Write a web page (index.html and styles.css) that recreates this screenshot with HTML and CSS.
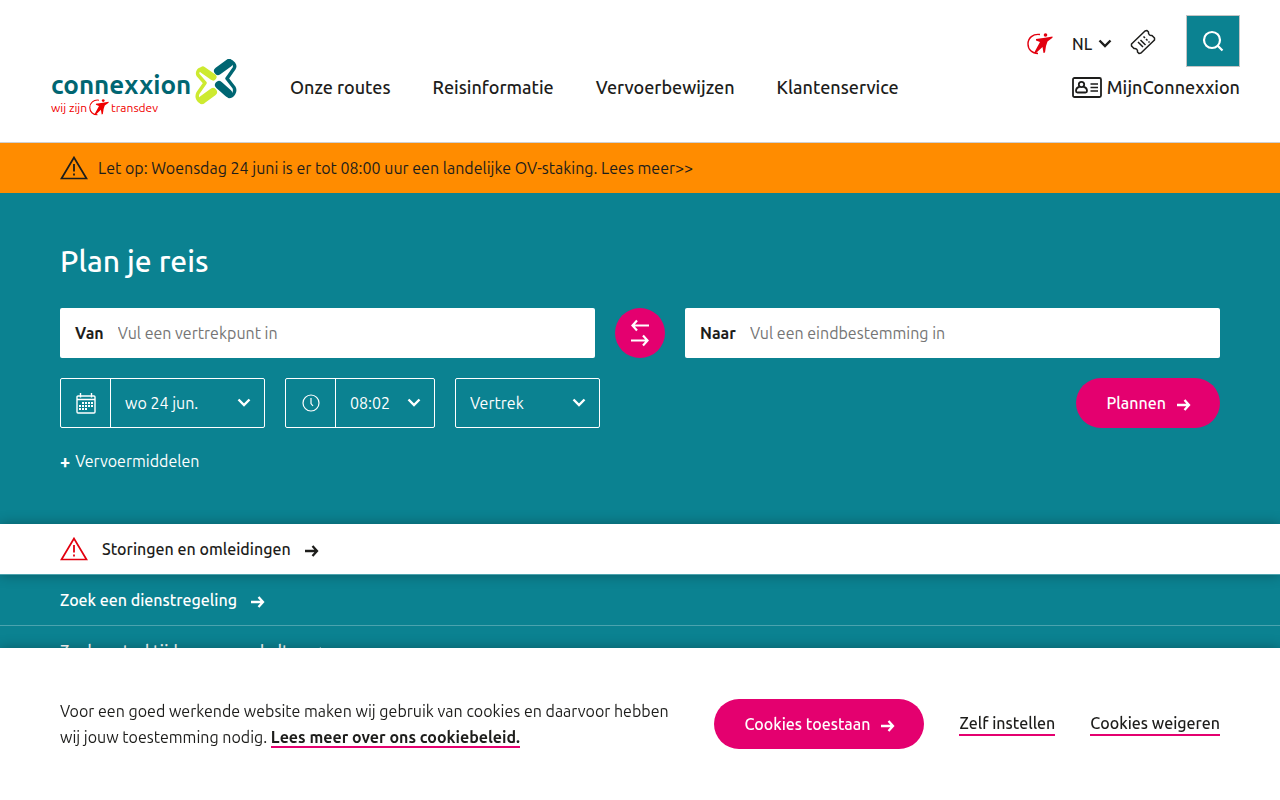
FILE: index.html
```html
<!DOCTYPE html>
<html lang="nl">
<head>
    <meta charset="UTF-8">
    <meta name="viewport" content="width=device-width, initial-scale=1.0">
    <title>Connexxion</title>
    <link rel="stylesheet" href="styles.css">
</head>
<body>
    <!-- Shared icons -->
    <svg class="sprite" aria-hidden="true">
        <symbol id="arrow" viewBox="0 0 14 12">
            <path d="M0 6h12M7.500 1l4.500 5-4.500 5" fill="none" stroke="currentColor" stroke-width="2.300"/>
        </symbol>
        <symbol id="chevron" viewBox="0 0 14 10">
            <path d="M1.500 1.500l5.500 5.500 5.500-5.500" fill="none" stroke="currentColor" stroke-width="2.400"/>
        </symbol>
        <symbol id="warning" viewBox="0 0 28 24">
            <path d="M14 1.500L1.500 22.500h25z" fill="none" stroke="currentColor" stroke-width="1.700"/>
            <path d="M14 8v7.500M14 17.500v2" fill="none" stroke="currentColor" stroke-width="1.800"/>
        </symbol>
        <symbol id="transdev" viewBox="0 0 26 22">
            <path d="M13 1.500C6 .5 1 5 1 11c0 5.500 4 9.500 10 9.500" fill="none" stroke="currentColor" stroke-width="1.400"/>
            <circle cx="18.500" cy="2" r="1.800" fill="currentColor"/>
            <path d="M9 6l9-1.200 7.500-1.300v1.200L20.500 8.500 19 13l-1 6.500-1.500.5-1-6-6.500 6H7l6-11-4-1.500z" fill="currentColor"/>
        </symbol>
    </svg>

    <header class="header">
        <a class="logo" href="#" aria-label="Connexxion, wij zijn transdev">
            <span class="logo-text">
                <span class="logo-name">connexxion</span>
                <span class="logo-sub">wij zijn <svg class="logo-figure"><use href="#transdev"/></svg> <span>transdev</span></span>
            </span>
            <svg class="logo-mark" viewBox="0 0 42 46">
                <g fill="none" stroke-linejoin="round" stroke-linecap="round">
                    <path d="M18 18L8 11" stroke="#cdea30" stroke-width="7"/>
                    <path d="M7 10C3 10 2 14 3 16l7 8-7 10c-2 4 0 9 5 9" stroke="#cdea30" stroke-width="3.500"/>
                    <path d="M7 41l11-8" stroke="#cdea30" stroke-width="8"/>
                    <path d="M23 12l11-8" stroke="#006672" stroke-width="8"/>
                    <path d="M33 2.500c5-1 8 4 6 7l-7 10 7 9c2 4-1 9-5 9" stroke="#006672" stroke-width="3.500"/>
                    <path d="M24 26l9 8" stroke="#006672" stroke-width="8"/>
                </g>
            </svg>
        </a>
        <nav class="nav">
            <a href="#">Onze routes</a>
            <a href="#">Reisinformatie</a>
            <a href="#">Vervoerbewijzen</a>
            <a href="#">Klantenservice</a>
        </nav>
        <div class="header-side">
            <div class="header-tools">
                <a class="transdev-link" href="#" aria-label="Transdev"><svg width="26" height="22"><use href="#transdev"/></svg></a>
                <div class="language">
                    <select aria-label="Taal"><option>NL</option><option>EN</option></select>
                    <svg class="chevron"><use href="#chevron"/></svg>
                </div>
                <a class="ticket" href="#" aria-label="Tickets">
                    <svg width="26" height="26" viewBox="0 0 26 26" fill="none" stroke="currentColor" stroke-width="1.500" stroke-linejoin="round">
                        <path d="M1.500 15L15 2l2-.5 1.500 1.500c-.5 2 1.500 4 3.500 3.500L24.500 9v2L11 24l-2 .5L7.500 23c.5-2-1.500-4-3.500-3.500L1.500 17z"/>
                        <path d="M8 13l5 5M10.500 11l5 5M13.500 7.500l1.500 1.500M16 10l1.500 1.500M18.500 12.500l1 1"/>
                    </svg>
                </a>
                <button class="search" type="button" aria-label="Zoeken">
                    <svg width="22" height="22" viewBox="0 0 22 22" fill="none" stroke="currentColor" stroke-width="2.200">
                        <circle cx="10" cy="10" r="8"/>
                        <path d="M15.500 15.500l5 5"/>
                    </svg>
                </button>
            </div>
            <a class="account" href="#">
                <svg width="30" height="21" viewBox="0 0 30 21" fill="none" stroke="currentColor" stroke-width="1.800">
                    <rect x="1" y="1" width="28" height="19" rx="1.500"/>
                    <circle cx="9.500" cy="7.500" r="2.700"/>
                    <path d="M7.500 10c-3 .5-3.500 2-3.500 4 0 1 .5 1.500 1.500 1.500h8c1 0 1.500-.5 1.500-1.500 0-2-.5-3.500-3.500-4"/>
                    <path d="M18.500 7h7.500M18.500 10.500h7.500M18.500 14h7.500" stroke-width="1.500"/>
                </svg>
                MijnConnexxion
            </a>
        </div>
    </header>

    <a class="alert" href="#">
        <svg width="28" height="24"><use href="#warning"/></svg>
        Let op: Woensdag 24 juni is er tot 08:00 uur een landelijke OV-staking. Lees meer&gt;&gt;
    </a>

    <main>
        <form class="planner">
            <h1>Plan je reis</h1>
            <div class="route">
                <div class="field">
                    <label for="from">Van</label>
                    <input id="from" type="text" placeholder="Vul een vertrekpunt in">
                </div>
                <button class="swap" type="button" aria-label="Wissel van en naar">
                    <svg width="20" height="28" viewBox="0 0 20 28" fill="none" stroke="currentColor" stroke-width="2.200">
                        <path d="M19 6.500H2.500M7 1.500L2.500 6.500 7 11.500M1 21.500h16.500M13 16.500l4.500 5-4.500 5"/>
                    </svg>
                </button>
                <div class="field">
                    <label for="to">Naar</label>
                    <input id="to" type="text" placeholder="Vul een eindbestemming in">
                </div>
            </div>
            <div class="options">
                <div class="picker picker-date">
                    <label for="date" aria-label="Datum">
                        <svg width="20" height="21" viewBox="0 0 20 21" fill="none" stroke="currentColor" stroke-width="1.400">
                            <rect x="1" y="3" width="18" height="17" rx="1"/>
                            <path d="M1 6.500h18M4.500 0v4.500M15.500 0v4.500"/>
                            <path d="M6 10h12M3 13h15M3 16h9" stroke-width="1.800" stroke-dasharray="2 1"/>
                        </svg>
                    </label>
                    <select id="date"><option>wo 24 jun.</option></select>
                    <svg class="chevron"><use href="#chevron"/></svg>
                </div>
                <div class="picker picker-time">
                    <label for="time" aria-label="Tijd">
                        <svg width="18" height="18" viewBox="0 0 18 18" fill="none" stroke="currentColor" stroke-width="1.200">
                            <circle cx="9" cy="9" r="8"/>
                            <path d="M9 4v5.500l2 2.500"/>
                        </svg>
                    </label>
                    <select id="time"><option>08:02</option></select>
                    <svg class="chevron"><use href="#chevron"/></svg>
                </div>
                <div class="picker picker-type">
                    <select aria-label="Vertrek of aankomst"><option>Vertrek</option><option>Aankomst</option></select>
                    <svg class="chevron"><use href="#chevron"/></svg>
                </div>
                <button class="button" type="submit">Plannen <svg class="arrow"><use href="#arrow"/></svg></button>
            </div>
            <button class="modes" type="button"><b>+</b> Vervoermiddelen</button>
        </form>

        <nav class="shortcuts">
            <a class="shortcut shortcut-alert" href="#">
                <svg width="28" height="24"><use href="#warning"/></svg>
                Storingen en omleidingen <svg class="arrow"><use href="#arrow"/></svg>
            </a>
            <a class="shortcut" href="#">Zoek een dienstregeling <svg class="arrow"><use href="#arrow"/></svg></a>
            <a class="shortcut" href="#">Zoek vertrektijden van een halte <svg class="arrow"><use href="#arrow"/></svg></a>
        </nav>
    </main>

    <section class="cookies" aria-label="Cookies">
        <p>Voor een goed werkende website maken wij gebruik van cookies en daarvoor hebben wij jouw toestemming nodig. <a href="#">Lees meer over ons cookiebeleid.</a></p>
        <button class="button" type="button">Cookies toestaan <svg class="arrow"><use href="#arrow"/></svg></button>
        <a href="#">Zelf instellen</a>
        <a href="#">Cookies weigeren</a>
    </section>
</body>
</html>
```
FILE: styles.css
```css
* {
    box-sizing: border-box;
}

body {
    margin: 0;
    padding-bottom: 152px;
    font-family: Ubuntu, "Noto Sans", sans-serif;
    font-size: 16px;
    line-height: 26px;
    color: #1d1d1b;
    background-color: #0b8291;
}

a {
    color: inherit;
    text-decoration: none;
}

button,
input,
select {
    font: inherit;
    color: inherit;
}

button {
    cursor: pointer;
}

svg {
    flex: none;
}

.sprite {
    display: none;
}

.arrow {
    width: 14px;
    height: 12px;
}

.chevron {
    position: absolute;
    right: 13px;
    width: 14px;
    height: 10px;
    pointer-events: none;
}

.button {
    display: flex;
    align-items: center;
    gap: 11px;
    height: 50px;
    padding: 0 29px 0 30px;
    border: none;
    border-radius: 25px;
    background-color: #e4006f;
    color: #ffffff;
    font-weight: 500;
    white-space: nowrap;
}

.button .arrow {
    margin-top: 4px;
}

/* Header */
.header {
    display: flex;
    align-items: flex-end;
    padding: 15px 40px 42px 51px;
    border-bottom: 1px solid #d0d0d0;
    background-color: #ffffff;
}

.logo {
    display: flex;
    width: 187px;
    margin-right: 52px;
    margin-bottom: -16px;
}

.logo-text {
    display: flex;
    flex-direction: column;
    width: 144px;
    padding-top: 12px;
}

.logo-name {
    font-size: 26px;
    font-weight: 700;
    line-height: 28px;
    color: #006672;
}

.logo-sub {
    display: flex;
    align-items: center;
    gap: 2px;
    font-size: 12px;
    line-height: 16px;
    color: #f00000;
}

.logo-figure {
    width: 20px;
    height: 17px;
}

.logo-mark {
    width: 42px;
    height: 46px;
}

.nav {
    display: flex;
    gap: 42px;
    font-size: 18px;
    font-weight: 500;
    white-space: nowrap;
}

.header-side {
    display: flex;
    flex-direction: column;
    align-items: flex-end;
    gap: 7px;
    margin-left: auto;
    font-weight: 500;
}

.header-tools {
    display: flex;
    align-items: center;
}

.transdev-link {
    display: flex;
    margin-top: 6px;
    margin-right: 19px;
    color: #e2000f;
}

.language {
    position: relative;
    display: flex;
    align-items: center;
    margin-top: 6px;
}

.language select {
    width: 40px;
    padding: 0;
    border: none;
    background: none;
    appearance: none;
}

.language .chevron {
    right: 0;
}

.ticket {
    display: flex;
    margin: 2px 30px 0 18px;
}

.search {
    display: flex;
    align-items: center;
    justify-content: center;
    width: 54px;
    height: 52px;
    border: 1px solid #c4c4c4;
    background-color: #0b8291;
    color: #ffffff;
}

.account {
    display: flex;
    align-items: center;
    gap: 5px;
    font-size: 18px;
}

/* Alert bar */
.alert {
    display: flex;
    align-items: center;
    gap: 10px;
    min-height: 50px;
    padding: 0 60px;
    background-color: #ff8c00;
}

/* Planner */
.planner {
    padding: 48px 60px 50px;
    color: #ffffff;
}

.planner h1 {
    margin: 0 0 27px;
    font-size: 30px;
    font-weight: 500;
    line-height: 40px;
}

.route {
    display: flex;
    gap: 20px;
}

.field {
    display: flex;
    flex: 1;
    align-items: center;
    gap: 14px;
    height: 50px;
    padding: 0 15px;
    border-radius: 2px;
    background-color: #ffffff;
    color: #1d1d1b;
}

.field label {
    font-weight: 700;
}

.field input {
    flex: 1;
    min-width: 0;
    padding: 0;
    border: none;
    background: none;
}

.field input::placeholder {
    color: #757575;
}

.swap {
    display: flex;
    align-items: center;
    justify-content: center;
    width: 50px;
    height: 50px;
    padding: 0;
    border: none;
    border-radius: 50%;
    background-color: #e4006f;
    color: #ffffff;
}

.options {
    display: flex;
    gap: 20px;
    margin: 20px 0;
}

.options .button {
    margin-left: auto;
}

.picker {
    position: relative;
    display: flex;
    align-items: center;
    height: 50px;
    border: 1px solid #ffffff;
    border-radius: 2px;
}

.picker label {
    display: flex;
    align-items: center;
    justify-content: center;
    width: 50px;
    height: 100%;
    border-right: 1px solid #ffffff;
}

.picker select {
    flex: 1;
    min-width: 0;
    height: 100%;
    padding: 0 14px;
    border: none;
    background: none;
    appearance: none;
}

.picker-date {
    width: 205px;
}

.picker-time {
    width: 150px;
}

.picker-type {
    width: 145px;
}

.modes {
    display: flex;
    gap: 5px;
    padding: 0;
    border: none;
    background: none;
}

.modes b {
    font-size: 18px;
}

/* Shortcuts */
.shortcut {
    display: flex;
    align-items: center;
    gap: 14px;
    height: 51px;
    padding: 0 60px;
    border-bottom: 1px solid #4ba3ae;
    color: #ffffff;
    font-weight: 500;
}

.shortcut .arrow {
    margin-top: 4px;
}

.shortcut-alert {
    position: relative;
    background-color: #ffffff;
    color: #1d1d1b;
    box-shadow: 0 0 12px rgba(0, 0, 0, 0.3);
}

.shortcut-alert svg:first-child {
    color: #e2000f;
}

/* Cookie bar */
.cookies {
    position: fixed;
    right: 0;
    bottom: 0;
    left: 0;
    display: flex;
    align-items: center;
    gap: 35px;
    padding: 50px 60px;
    background-color: #ffffff;
    box-shadow: 0 0 12px rgba(0, 0, 0, 0.3);
}

.cookies p {
    flex: 1;
    margin: 0;
}

.cookies a {
    border-bottom: 2px solid #e4006f;
    font-weight: 500;
    line-height: 22px;
    white-space: nowrap;
}

.cookies p a {
    font-weight: 700;
}
```
